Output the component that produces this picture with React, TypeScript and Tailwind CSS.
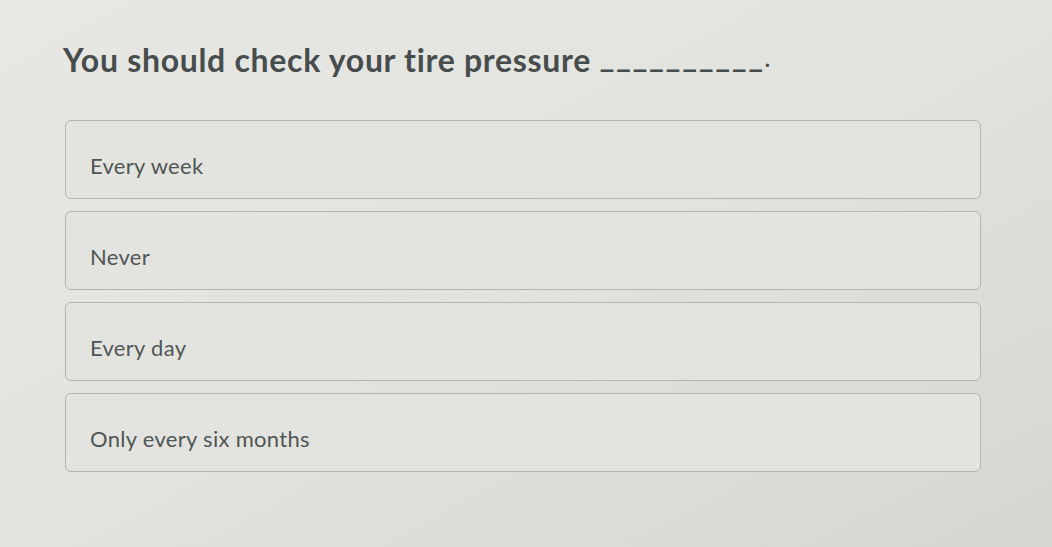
export default function App() {
  const options = ["Every week", "Never", "Every day", "Only every six months"];
  return (
    <div
      className="w-[1052px] h-[547px] overflow-hidden bg-gradient-to-br from-[#e7e8e4] via-[#e2e3df] to-[#d5d6d1] pt-[38px] pl-[63px] pr-[70px]"
      style={{ fontFamily: "Lato, 'Open Sans', sans-serif" }}
    >
      <h1 className="text-[32px] font-bold text-[#474c4d] leading-[44px] tracking-[0.7px] whitespace-nowrap">
        You should check your tire pressure{" "}
        <span className="tracking-[1.6px] relative -top-[5px]">__________</span>
        <span className="text-[22px] relative -top-[5px]">.</span>
      </h1>
      <div className="mt-[34px] flex flex-col gap-[12px] pl-[2px] w-[918px]">
        {options.map((o) => (
          <div
            key={o}
            className="h-[79px] rounded-[6px] border-[1.5px] border-[#b3b5b1] bg-[#e3e4e0] flex items-center pl-[24px] pt-[12px]"
          >
            <span className="text-[22px] text-[#505555] leading-none tracking-[0.3px]">{o}</span>
          </div>
        ))}
      </div>
    </div>
  );
}
